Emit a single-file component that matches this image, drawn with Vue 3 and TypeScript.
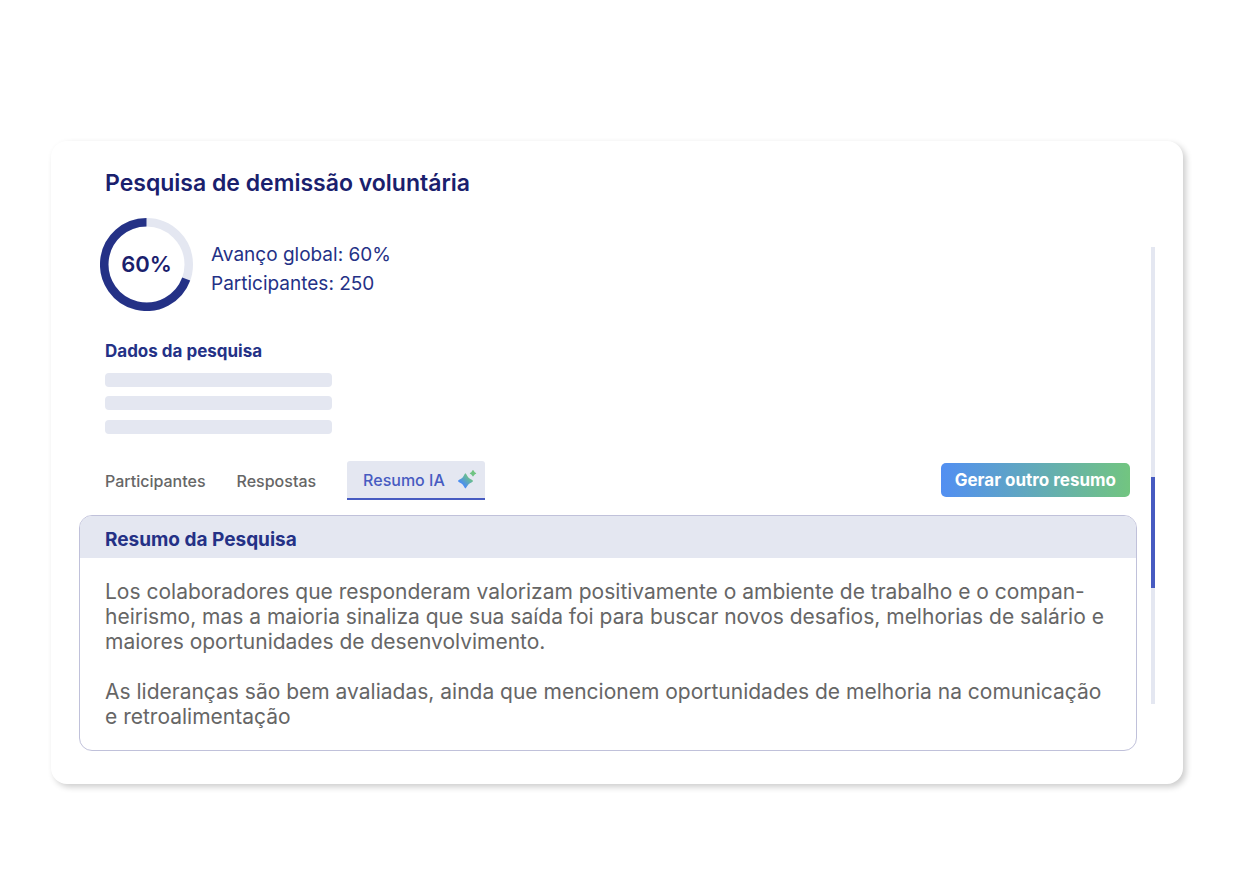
<script setup lang="ts">
import { ref } from 'vue'

type TabId = 'participantes' | 'respostas' | 'resumo'

const tabs: { id: TabId; label: string }[] = [
  { id: 'participantes', label: 'Participantes' },
  { id: 'respostas', label: 'Respostas' },
  { id: 'resumo', label: 'Resumo IA' },
]
const active = ref<TabId>('resumo')
</script>

<template>
  <main class="page">
    <article class="card">
      <div class="content">
        <header class="intro">
          <h1 class="title">Pesquisa de demissão voluntária</h1>
          <div class="progress">
            <div class="ring">
              <svg viewBox="0 0 93 93" aria-hidden="true">
                <circle class="ring-track" cx="46.5" cy="46.5" r="42.25" />
                <path class="ring-value" d="M86.2 60.95A42.25 42.25 0 1 1 46.5 4.25" />
              </svg>
              <span class="ring-label">60%</span>
            </div>
            <div class="stats">
              <p>Avanço global: 60%</p>
              <p>Participantes: 250</p>
            </div>
          </div>
          <h2 class="subtitle">Dados da pesquisa</h2>
          <div class="bars">
            <span v-for="n in 3" :key="n" class="bar"></span>
          </div>
        </header>

        <div class="toolbar">
          <div class="tabs" role="tablist">
            <button
              v-for="tab in tabs"
              :key="tab.id"
              type="button"
              role="tab"
              class="tab"
              :class="{ active: active === tab.id }"
              :aria-selected="active === tab.id"
              @click="active = tab.id"
            >
              {{ tab.label }}
              <svg v-if="tab.id === 'resumo'" class="spark" viewBox="0 0 20 20" aria-hidden="true">
                <defs>
                  <linearGradient id="spark-fill" gradientUnits="userSpaceOnUse" x1="3" y1="17" x2="17" y2="3">
                    <stop offset="0" stop-color="#4285ff" />
                    <stop offset="0.2" stop-color="#4b8eef" />
                    <stop offset="0.65" stop-color="#6abd91" />
                    <stop offset="1" stop-color="#70c47f" />
                  </linearGradient>
                </defs>
                <path fill="url(#spark-fill)" d="M8.4 3.3C9.1 3.3 9.9 6 11.6 7.7C13.2 9.3 16 10 16 10.9C16 11.8 13.2 12.6 11.6 14.2C9.9 15.9 9.1 18.5 8.4 18.5C7.7 18.5 7.1 15.9 5.4 14.2C3.8 12.6 1 11.8 1 10.9C1 10 3.8 9.3 5.4 7.7C7.1 6 7.7 3.3 8.4 3.3Z" />
                <path fill="url(#spark-fill)" d="M16 0.1C16.6 0.1 16.9 1.3 17.5 1.9C18.1 2.5 19.2 2.7 19.2 3.3C19.2 3.9 18.1 4.1 17.5 4.7C16.9 5.3 16.6 6.5 16 6.5C15.4 6.5 15.1 5.3 14.5 4.7C13.9 4.1 12.8 3.9 12.8 3.3C12.8 2.7 13.9 2.5 14.5 1.9C15.1 1.3 15.4 0.1 16 0.1Z" />
              </svg>
            </button>
          </div>
          <button type="button" class="generate">Gerar outro resumo</button>
        </div>

        <section class="panel">
          <h2 class="panel-title">Resumo da Pesquisa</h2>
          <div class="panel-body">
            <p>
              Los colaboradores que responderam valorizam positivamente o ambiente de trabalho e o compan-<br />
              heirismo, mas a maioria sinaliza que sua saída foi para buscar novos desafios, melhorias de salário e<br />
              maiores oportunidades de desenvolvimento.
            </p>
            <p>
              As lideranças são bem avaliadas, ainda que mencionem oportunidades de melhoria na comunicação<br />
              e retroalimentação
            </p>
          </div>
        </section>
      </div>
      <div class="scroll" aria-hidden="true"><span class="thumb"></span></div>
    </article>
  </main>
</template>

<style>
body {
  margin: 0;
  background: #fff;
}
</style>

<style scoped>
.page {
  padding: 141px 51px 110px;
  font-family: Inter, "Liberation Sans", sans-serif;
}
.card {
  display: flex;
  gap: 14px;
  padding: 26px 28px 33px;
  border-radius: 16px;
  background: #fff;
  box-shadow: 3px 3px 6px rgba(0, 0, 0, 0.2);
}
.content {
  flex: 1;
  min-width: 0;
}
.intro {
  padding-left: 26px;
}
h1,
h2,
p {
  margin: 0;
}
.title {
  color: #1a206d;
  font-size: 23px;
  line-height: 32px;
  font-weight: 600;
}
.progress {
  display: flex;
  align-items: center;
  gap: 18px;
  margin: 19px 0 28px -5px;
}
.ring {
  display: grid;
  place-items: center;
  width: 93px;
  height: 93px;
}
.ring > * {
  grid-area: 1 / 1;
}
.ring svg {
  width: 93px;
  height: 93px;
}
.ring-track,
.ring-value {
  fill: none;
  stroke-width: 8.5;
}
.ring-track {
  stroke: #e4e7f1;
}
.ring-value {
  stroke: #243186;
}
.ring-label {
  padding-bottom: 2px;
  color: #1a206d;
  font-size: 22px;
  line-height: 28px;
  font-weight: 600;
}
.stats {
  padding-top: 8px;
  color: #243186;
  font-size: 19px;
  line-height: 29px;
}
.subtitle {
  color: #243186;
  font-size: 17px;
  line-height: 24px;
  font-weight: 700;
}
.bars {
  display: flex;
  flex-direction: column;
  gap: 9px;
  margin-top: 10px;
}
.bar {
  width: 227px;
  height: 14px;
  border-radius: 4px;
  background: #e4e7f1;
}
.bar:last-child {
  margin-top: 1px;
}
.toolbar {
  display: flex;
  align-items: center;
  justify-content: space-between;
  margin: 27px 7px 15px 26px;
}
.tabs {
  display: flex;
  align-items: stretch;
  gap: 31px;
}
button {
  border: 0;
  padding: 0;
  font-family: inherit;
  cursor: pointer;
}
.tab {
  height: 39px;
  background: none;
  color: #666;
  font-size: 16px;
  line-height: 24px;
  font-weight: 500;
}
.tab.active {
  display: flex;
  align-items: center;
  gap: 12px;
  padding: 0 8px 0 16px;
  border-bottom: 2px solid #475bc1;
  border-radius: 3px 3px 0 0;
  background: #e4e7f1;
  color: #475bc1;
}
.spark {
  width: 20px;
  height: 20px;
}
.generate {
  height: 34px;
  margin-bottom: 1px;
  padding: 0 14px;
  border-radius: 5px;
  background: linear-gradient(90deg, #528ff2, #72c580);
  color: #fff;
  font-size: 17px;
  line-height: 24px;
  font-weight: 700;
}
.panel {
  overflow: hidden;
  border: 1px solid #c0c1da;
  border-radius: 13px;
}
.panel-title {
  padding: 10px 25px 4px;
  background: #e4e7f1;
  color: #243186;
  font-size: 19px;
  line-height: 28px;
  font-weight: 700;
}
.panel-body {
  display: grid;
  gap: 25px;
  padding: 21px 25px;
  color: #666;
  font-size: 21px;
  line-height: 25px;
  white-space: nowrap;
}
.scroll {
  display: grid;
  grid-template-rows: 230fr 111fr 116fr;
  width: 4px;
  margin: 80px 0 47px;
  background: #e4e7f1;
}
.thumb {
  grid-row: 2;
  background: #475bc1;
}
</style>
